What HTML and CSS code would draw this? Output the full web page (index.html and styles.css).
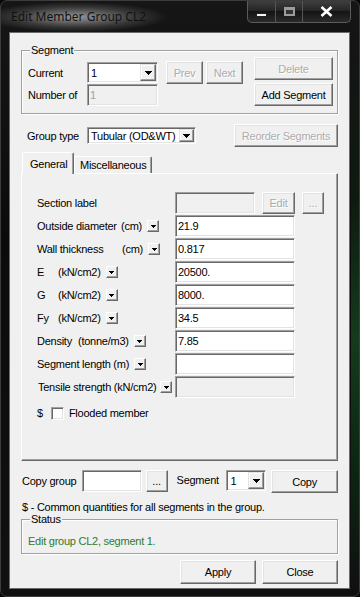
FILE: index.html
```html
<!DOCTYPE html>
<html lang="en">
<head>
    <meta charset="UTF-8">
    <meta name="viewport" content="width=device-width, initial-scale=1.0">
    <title>Edit Member Group CL2</title>
    <link rel="stylesheet" href="styles.css">
</head>
<body>

    <!-- shared arrow glyphs -->
    <svg class="defs" width="0" height="0">
        <symbol id="tri7" viewBox="0 0 7 4"><path d="M0 0h7v1h-1v1h-1v1h-1v1h-1v-1h-1v-1h-1v-1h-1z"/></symbol>
        <symbol id="tri5" viewBox="0 0 5 3"><path d="M0 0h5v1h-1v1h-1v1h-1v-1h-1v-1h-1z"/></symbol>
    </svg>

    <div class="window">
        <div class="titlebar">
            <span class="title">Edit Member Group CL2</span>
            <div class="caption-buttons">
                <span class="cap cap-min"><i></i></span>
                <span class="cap cap-max"><i></i></span>
                <span class="cap cap-close">
                    <svg width="13" height="11" viewBox="0 0 13 11"><path d="M1.5 1l10 9M11.5 1l-10 9" stroke="#fff" stroke-width="2.6" fill="none"/></svg>
                </span>
            </div>
        </div>

        <div class="body-row">
            <div class="client">

                <div class="group segment-group">
                    <span class="legend">Segment</span>
                    <div class="seg-fields">
                        <div class="seg-row">
                            <span class="seg-label">Current</span>
                            <div class="combo seg-combo">
                                <span class="combo-value">1</span>
                                <span class="combo-btn"><svg width="7" height="4"><use href="#tri7"/></svg></span>
                            </div>
                        </div>
                        <div class="seg-row seg-row2">
                            <span class="seg-label">Number of</span>
                            <div class="field disabled seg-count">1</div>
                        </div>
                    </div>
                    <div class="seg-nav">
                        <span class="btn disabled nav-btn">Prev</span>
                        <span class="btn disabled nav-btn">Next</span>
                    </div>
                    <div class="seg-actions">
                        <span class="btn disabled seg-btn">Delete</span>
                        <span class="btn seg-btn">Add Segment</span>
                    </div>
                </div>

                <div class="type-row">
                    <span class="type-label">Group type</span>
                    <div class="combo type-combo">
                        <span class="combo-value">Tubular (OD&amp;WT)</span>
                        <span class="combo-btn"><svg width="7" height="4"><use href="#tri7"/></svg></span>
                    </div>
                    <span class="btn disabled reorder-btn">Reorder Segments</span>
                </div>

                <div class="tabs">
                    <span class="tab active">General</span>
                    <span class="tab">Miscellaneous</span>
                </div>

                <div class="panel">
                    <div class="row">
                        <div class="lbl"><span class="label-text">Section label</span></div>
                        <div class="field disabled section-field"></div>
                        <span class="btn disabled edit-btn">Edit</span>
                        <span class="btn disabled dots-btn">...</span>
                    </div>
                    <div class="row">
                        <div class="lbl"><span class="nm nm-od">Outside diameter</span><span>(cm)</span><span class="dd"><svg width="5" height="3"><use href="#tri5"/></svg></span></div>
                        <div class="field">21.9</div>
                    </div>
                    <div class="row">
                        <div class="lbl"><span class="nm nm-wt">Wall thickness</span><span>(cm)</span><span class="dd"><svg width="5" height="3"><use href="#tri5"/></svg></span></div>
                        <div class="field">0.817</div>
                    </div>
                    <div class="row">
                        <div class="lbl"><span class="nm nm-e">E</span><span>(kN/cm2)</span><span class="dd"><svg width="5" height="3"><use href="#tri5"/></svg></span></div>
                        <div class="field">20500.</div>
                    </div>
                    <div class="row">
                        <div class="lbl"><span class="nm nm-e">G</span><span>(kN/cm2)</span><span class="dd"><svg width="5" height="3"><use href="#tri5"/></svg></span></div>
                        <div class="field">8000.</div>
                    </div>
                    <div class="row">
                        <div class="lbl"><span class="nm nm-e">Fy</span><span>(kN/cm2)</span><span class="dd"><svg width="5" height="3"><use href="#tri5"/></svg></span></div>
                        <div class="field">34.5</div>
                    </div>
                    <div class="row">
                        <div class="lbl"><span class="nm nm-den">Density</span><span>(tonne/m3)</span><span class="dd"><svg width="5" height="3"><use href="#tri5"/></svg></span></div>
                        <div class="field">7.85</div>
                    </div>
                    <div class="row">
                        <div class="lbl"><span>Segment length (m)</span><span class="dd"><svg width="5" height="3"><use href="#tri5"/></svg></span></div>
                        <div class="field"></div>
                    </div>
                    <div class="row">
                        <div class="lbl lbl-tensile"><span class="clip">Tensile strength (kN/cm2)</span><span class="dd dd-tight"><svg width="5" height="3"><use href="#tri5"/></svg></span></div>
                        <div class="field disabled"></div>
                    </div>
                    <div class="flood-row">
                        <span>$</span>
                        <span class="check"></span>
                        <span>Flooded member</span>
                    </div>
                </div>

                <div class="copy-row">
                    <span class="copy-label">Copy group</span>
                    <div class="field copy-field"></div>
                    <span class="btn copy-dots">...</span>
                    <span class="copy-seg-label">Segment</span>
                    <div class="combo copy-combo">
                        <span class="combo-value">1</span>
                        <span class="combo-btn"><svg width="7" height="4"><use href="#tri7"/></svg></span>
                    </div>
                    <span class="btn copy-btn">Copy</span>
                </div>

                <div class="note">$ - Common quantities for all segments in the group.</div>

                <div class="group status-group">
                    <span class="legend">Status</span>
                    <div class="status-text">Edit group CL2, segment 1.</div>
                </div>

                <div class="footer">
                    <span class="btn footer-btn">Apply</span>
                    <span class="btn footer-btn">Close</span>
                </div>
            </div>
            <div class="glass"></div>
        </div>
    </div>

</body>
</html>
```

FILE: styles.css
```css
* {
    box-sizing: border-box;
}

body {
    margin: 0;
    background: #050805;
    font-family: "Liberation Sans", Arial, sans-serif;
    font-size: 11px;
    letter-spacing: -0.25px;
    color: #000;
}

.defs {
    position: absolute;
    width: 0;
    height: 0;
}

/* window frame */
.window {
    width: 360px;
    height: 597px;
    border: 1px solid #3c3c3c;
    border-radius: 7px;
    background: linear-gradient(to bottom, #161616, #0b0b0b 40%, #101010);
    overflow: hidden;
    display: flex;
    flex-direction: column;
}

.titlebar {
    height: 31px;
    display: flex;
    align-items: flex-start;
    flex-shrink: 0;
    background: radial-gradient(ellipse 92px 15px at 74px 16px, rgba(175, 175, 175, 0.85), rgba(120, 120, 120, 0.35) 65%, rgba(60, 60, 60, 0) 100%);
}

.title {
    margin: 9px 0 0 10px;
    line-height: 14px;
    font-family: "Noto Sans", "Open Sans", sans-serif;
    font-size: 12px;
    letter-spacing: 0;
    color: #111;
}

.caption-buttons {
    margin-left: auto;
    margin-right: 8px;
    display: flex;
    height: 22px;
    border: 1px solid #5b5b5b;
    border-top: none;
    border-radius: 0 0 5px 5px;
    overflow: hidden;
    background: linear-gradient(to bottom, #3e3e3e, #262626 45%, #141414 50%, #2a2a2a);
}

.cap {
    display: flex;
    align-items: center;
    justify-content: center;
    height: 100%;
    border-right: 1px solid #555;
}

.cap-min {
    width: 28px;
}

.cap-min i {
    width: 11px;
    height: 4px;
    margin-top: 6px;
    background: #f4f4f4;
    border: 1px solid #222;
}

.cap-max {
    width: 27px;
}

.cap-max i {
    width: 11px;
    height: 9px;
    border: 2px solid #9c9c9c;
    border-top-width: 3px;
    background: #333;
}

.cap-close {
    width: 47px;
    border-right: none;
}

.body-row {
    display: flex;
    flex: 1;
}

.glass {
    flex: 1;
    margin: 0 0 7px 1px;
    background: linear-gradient(to bottom, #141414, #0e1a10 30%, #153a1d 55%, #0c2412 80%, #101010);
}

.client {
    margin-left: 8px;
    width: 341px;
    height: 557px;
    border: 1px solid #6b6b6b;
    background: #f0f0f0;
    padding: 17px 11px 0 11px;
    display: flex;
    flex-direction: column;
}

/* common controls */
.btn {
    display: flex;
    align-items: center;
    justify-content: center;
    background: #f0f0f0;
    border: 1px solid;
    border-color: #fff #696969 #696969 #fff;
    box-shadow: inset -1px -1px 0 #a0a0a0, inset 1px 1px 0 #e3e3e3;
    white-space: nowrap;
}

.btn.disabled {
    color: #acacac;
    text-shadow: 1px 1px 0 #fff;
}

.field {
    width: 120px;
    height: 22px;
    background: #fff;
    border: 1px solid;
    border-color: #a0a0a0 #fff #fff #a0a0a0;
    box-shadow: inset 1px 1px 0 #696969, inset -1px -1px 0 #e3e3e3;
    padding-left: 2px;
    line-height: 20px;
    white-space: nowrap;
}

.field.disabled {
    background: #f0f0f0;
    color: #a0a0a0;
}

.combo {
    display: flex;
    align-items: stretch;
    background: #fff;
    border: 1px solid;
    border-color: #a0a0a0 #fff #fff #a0a0a0;
    box-shadow: inset 1px 1px 0 #696969, inset -1px -1px 0 #e3e3e3;
    padding: 1px;
}

.combo-value {
    flex: 1;
    padding-left: 2px;
    display: flex;
    align-items: center;
    white-space: nowrap;
    overflow: hidden;
}

.combo-btn {
    width: 16px;
    display: flex;
    align-items: center;
    justify-content: center;
    background: #f0f0f0;
    border: 1px solid;
    border-color: #e3e3e3 #696969 #696969 #e3e3e3;
    box-shadow: inset -1px -1px 0 #a0a0a0, inset 1px 1px 0 #fff;
}

.dd {
    width: 12px;
    height: 12px;
    margin-left: 5px;
    display: flex;
    align-items: center;
    justify-content: center;
    flex-shrink: 0;
    background: #f0f0f0;
    border: 1px solid;
    border-color: #fff #696969 #696969 #fff;
    box-shadow: inset -1px -1px 0 #a0a0a0;
}

.dd svg,
.combo-btn svg {
    display: block;
}

/* group boxes */
.group {
    position: relative;
    border: 1px solid #a0a0a0;
    box-shadow: inset 1px 1px 0 #fff, 1px 1px 0 #fff;
}

.legend {
    position: absolute;
    top: -7px;
    left: 8px;
    padding: 0 1px;
    line-height: 13px;
    background: #f0f0f0;
}

.segment-group {
    height: 64px;
    display: flex;
    align-items: flex-start;
    padding: 6px 0 0 6px;
}

.seg-fields {
    margin-top: 5px;
}

.seg-row {
    display: flex;
    align-items: center;
    height: 21px;
}

.seg-row2 {
    margin-top: 1px;
    height: 22px;
}

.seg-label {
    width: 59px;
}

.seg-combo {
    width: 71px;
    height: 21px;
}

.seg-count {
    width: 71px;
}

.seg-nav {
    display: flex;
    gap: 3px;
    margin: 4px 0 0 8px;
}

.nav-btn {
    width: 37px;
    height: 23px;
}

.seg-actions {
    display: flex;
    flex-direction: column;
    gap: 3px;
    margin-left: 11px;
}

.seg-btn {
    width: 79px;
    height: 23px;
}

/* group type */
.type-row {
    display: flex;
    align-items: center;
    height: 23px;
    margin-top: 10px;
}

.type-label {
    width: 66px;
    padding-left: 6px;
}

.type-combo {
    width: 109px;
    height: 17px;
}

.type-combo .combo-btn {
    width: 15px;
}

.reorder-btn {
    margin-left: auto;
    width: 104px;
    height: 23px;
}

/* tabs */
.tabs {
    display: flex;
    align-items: flex-end;
    height: 21px;
    margin-top: 5px;
    padding-left: 1px;
}

.tab {
    height: 17px;
    padding: 0 5px;
    display: flex;
    align-items: center;
    border: 1px solid;
    border-color: #fff #696969 transparent #fff;
    border-bottom: none;
    box-shadow: inset -1px 0 0 #a0a0a0;
    border-radius: 2px 2px 0 0;
    background: #f0f0f0;
}

.tab.active {
    width: 52px;
    height: 22px;
    margin-bottom: -1px;
    padding: 0 0 0 7px;
    position: relative;
    z-index: 1;
}

.panel {
    height: 288px;
    border: 1px solid;
    border-color: #fff #696969 #696969 #fff;
    box-shadow: inset -1px -1px 0 #a0a0a0;
    padding: 18px 0 0 15px;
}

.row {
    display: flex;
    align-items: center;
    height: 22px;
    margin-bottom: 1px;
}

.lbl {
    width: 138px;
    display: flex;
    align-items: center;
    white-space: nowrap;
}

.nm {
    flex-shrink: 0;
}

.nm-od {
    width: 84px;
}

.nm-wt {
    width: 85px;
}

.nm-e {
    width: 21px;
}

.nm-den {
    width: 41px;
}

.lbl-tensile {
    padding-left: 1px;
}

.clip {
    width: 122px;
    overflow: hidden;
}

.dd-tight {
    margin-left: 0;
}

.section-field {
    width: 80px;
}

.edit-btn {
    width: 33px;
    height: 22px;
    margin-left: 7px;
}

.dots-btn {
    width: 22px;
    height: 22px;
    margin-left: 7px;
}

.flood-row {
    display: flex;
    align-items: center;
    height: 14px;
    margin-top: 8px;
}

.check {
    width: 13px;
    height: 13px;
    margin: 0 5px 0 8px;
    background: #fff;
    border: 1px solid;
    border-color: #a0a0a0 #fff #fff #a0a0a0;
    box-shadow: inset 1px 1px 0 #696969, inset -1px -1px 0 #e3e3e3;
}

/* copy row */
.copy-row {
    display: flex;
    align-items: flex-start;
    margin-top: 9px;
    height: 23px;
}

.copy-label {
    width: 61px;
    padding-left: 1px;
    line-height: 22px;
}

.copy-field {
    width: 60px;
}

.copy-dots {
    width: 22px;
    height: 22px;
    margin-left: 4px;
}

.copy-seg-label {
    width: 50px;
    margin-left: 9px;
    line-height: 21px;
}

.copy-combo {
    width: 40px;
    height: 21px;
}

.copy-btn {
    width: 67px;
    height: 23px;
    margin-left: 5px;
}

.note {
    margin-top: 8px;
    padding-left: 1px;
    line-height: 13px;
}

.status-group {
    height: 35px;
    margin-top: 5px;
    padding: 15px 0 0 6px;
}

.status-text {
    line-height: 13px;
    color: #2f7a2f;
}

.footer {
    display: flex;
    justify-content: flex-end;
    gap: 6px;
    margin-top: 6px;
}

.footer-btn {
    width: 76px;
    height: 24px;
}
```
